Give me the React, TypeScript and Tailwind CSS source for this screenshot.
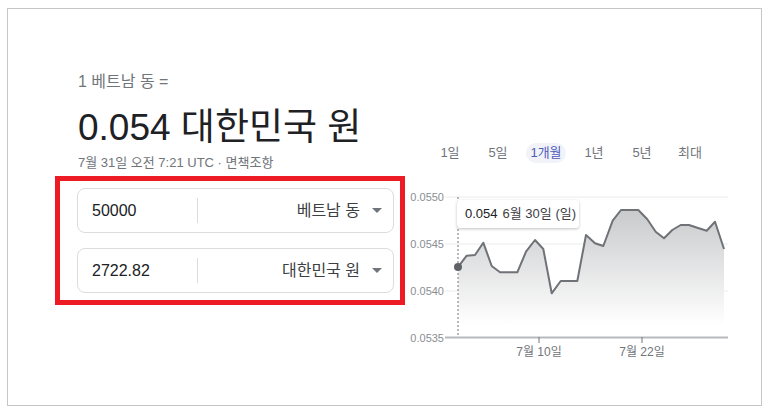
const font = { fontFamily: '"Liberation Sans", Arial, "Noto Sans CJK KR", sans-serif' }

const tabs = ["1일", "5일", "1개월", "1년", "5년", "최대"]

// chart points, local to the svg box (x - 400, y - 185)
const points: [number, number][] = [
    [58.3, 81.7], [66.7, 70.7], [75, 70], [83.3, 57.7], [91.7, 81], [100, 87.3],
    [117.3, 87.3], [126, 66.7], [135, 55], [143.3, 64], [151.7, 108.3], [160.7, 96],
    [177.3, 96], [186, 50], [195, 58.3], [203.3, 61], [212.7, 35.7], [221, 25],
    [238.3, 25], [247.3, 34.3], [255.7, 46.7], [264, 53.3], [272.3, 45], [280.7, 40],
    [289, 40], [297.3, 42.7], [306.7, 45.7], [315, 36.7], [324, 64],
]

const Caret = () => (
    <svg width="10" height="5" viewBox="0 0 10 5" className="shrink-0">
        <path d="M0 0h10L5 5z" fill="#70757a" />
    </svg>
)

const CurrencyRow = ({ value, unit }: { value: string, unit: string }) => {
    return (
        <div className="flex items-center h-[45px] w-[317px] rounded-[8px] border border-[#dadce0] bg-white">
            <div className="w-[119px] pl-[14px] text-[16px] text-[#202124]">{value}</div>
            <div className="w-px h-[25px] bg-[#dadce0]" />
            <div className="flex flex-1 items-center justify-end gap-[12px] pr-[11px] text-[16px] text-[#3c4043]">
                <span>{unit}</span>
                <Caret />
            </div>
        </div>
    )
}

const Chart = () => {
    const line = points.map(p => p.join(",")).join(" ")
    const area = `${line} 324,140 58.3,140`
    const grid = [12, 59, 106]
    const labels = ["0.0550", "0.0545", "0.0540", "0.0535"]

    return (
        <div className="relative w-[340px] h-[180px]">
            <svg width="340" height="180" viewBox="0 0 340 180" style={font}>
                <defs>
                    <linearGradient id="fade" x1="0" y1="25" x2="0" y2="140" gradientUnits="userSpaceOnUse">
                        <stop offset="0" stopColor="#c9cacc" />
                        <stop offset="1" stopColor="#ffffff" />
                    </linearGradient>
                </defs>
                {grid.map(y => (
                    <line key={y} x1="45" x2="328" y1={y} y2={y} stroke="#ececec" strokeWidth="1" />
                ))}
                <polygon points={area} fill="url(#fade)" />
                <line x1="58" x2="58" y1="12" y2="152" stroke="#70757a" strokeWidth="1" strokeDasharray="2 2" />
                <polyline points={line} fill="none" stroke="#6f7276" strokeWidth="2" strokeLinejoin="round" />
                <circle cx="58" cy="82" r="4" fill="#5f6368" />
                <line x1="45" x2="328" y1="152.5" y2="152.5" stroke="#b6b9bd" strokeWidth="2" />
                <line x1="139" x2="139" y1="152" y2="158" stroke="#70757a" strokeWidth="1" />
                <line x1="242" x2="242" y1="152" y2="158" stroke="#70757a" strokeWidth="1" />
                {labels.map((t, i) => (
                    <text key={t} x="44" y={12 + i * 47 + 4} textAnchor="end" fontSize="11" fill="#8a8e93">{t}</text>
                ))}
                <text x="139" y="171" textAnchor="middle" fontSize="12" fill="#70757a">7월 10일</text>
                <text x="242" y="171" textAnchor="middle" fontSize="12" fill="#70757a">7월 22일</text>
            </svg>
            <div className="absolute left-[57px] top-[15px] flex h-[28px] w-[122px] items-center gap-[5px] rounded-[3px] bg-white pl-[8px] text-[13px] shadow-[0_1px_3px_rgba(0,0,0,0.25)]">
                <span className="text-[#202124]">0.054</span>
                <span className="text-[#3c4043]">6월 30일 (일)</span>
            </div>
        </div>
    )
}

const App = () => {
    return (
        <div className="bg-white w-[770px] h-[413px] pt-[8px] pl-[7px]" style={font}>
            <div className="flex w-[755px] h-[398px] border border-[#c6c6c6]">
                <div className="w-[392px] pl-[47px] pt-[61px]">
                    <div className="pl-[23px]">
                        <div className="text-[16px] leading-[24px] text-[#70757a]">1 베트남 동 =</div>
                        <div className="mt-[12px] text-[37px] leading-[44px] text-[#202124]">0.054 대한민국 원</div>
                        <div className="mt-[4px] text-[13px] leading-[17px] text-[#70757a]">7월 31일 오전 7:21 UTC · 면책조항</div>
                    </div>
                    <div className="mt-[5px] flex w-[350px] flex-col gap-[15px] border-[5px] border-[#ed1c24] pl-[17px] pt-[7px] pb-[7px]">
                        <CurrencyRow value="50000" unit="베트남 동" />
                        <CurrencyRow value="2722.82" unit="대한민국 원" />
                    </div>
                </div>
                <div className="pt-[134px]">
                    <div className="flex gap-[8px] pl-[30px] text-[13px]">
                        {tabs.map(t => (
                            <div
                                key={t}
                                className={t === "1개월"
                                    ? "flex h-[20px] w-[40px] items-center justify-center rounded-full bg-[#f1f3f8] text-[#4f5cb8]"
                                    : "flex h-[20px] w-[40px] items-center justify-center text-[#70757a]"}
                            >
                                {t}
                            </div>
                        ))}
                    </div>
                    <div className="mt-[22px]">
                        <Chart />
                    </div>
                </div>
            </div>
        </div>
    )
}

export default App
